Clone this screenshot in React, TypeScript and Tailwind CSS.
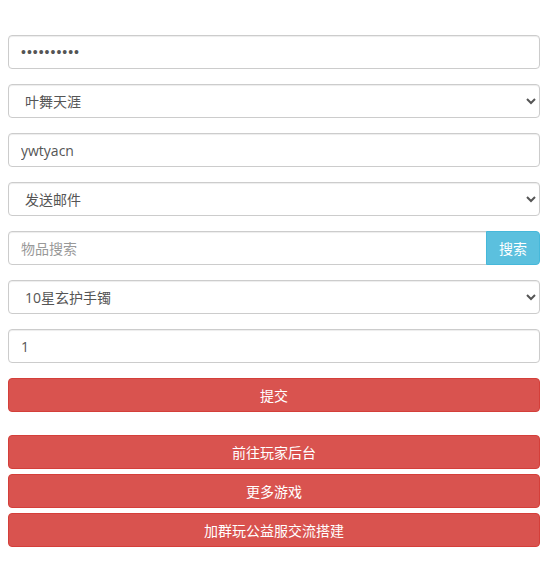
import { useState } from 'react';

const field =
  "block w-full h-[34px] px-3 text-[14px] text-[#555] bg-white border border-[#ccc] rounded-[4px] shadow-[inset_0_1px_1px_rgba(0,0,0,0.075)] outline-none placeholder:text-[#999]";

const redBtn =
  "block w-full h-[34px] text-[14px] text-white bg-[#d9534f] border border-[#d43f3a] rounded-[4px]";

export default function App() {
  const [pwd, setPwd] = useState("1234567890");
  const [role, setRole] = useState("叶舞天涯");
  const [acct, setAcct] = useState("ywtyacn");
  const [action, setAction] = useState("mail");
  const [item, setItem] = useState("10星玄护手镯");
  const [count, setCount] = useState("1");

  return (
    <div
      className="pl-2 pr-[10px] pt-[35px] bg-white min-h-[564px]"
      style={{ fontFamily: '"Open Sans", "Noto Sans CJK SC", sans-serif' }}
    >
      <div className="flex flex-col gap-[15px]">
        <input
          type="password"
          className={`${field} font-['Liberation_Sans'] tracking-[1px]`}
          value={pwd}
          onChange={(e) => setPwd(e.target.value)}
        />

        <select className={field} value={role} onChange={(e) => setRole(e.target.value)}>
          <option>叶舞天涯</option>
        </select>

        <input type="text" className={field} value={acct} onChange={(e) => setAcct(e.target.value)} />

        <select className={field} value={action} onChange={(e) => setAction(e.target.value)}>
          <option value="mail">发送邮件</option>
        </select>

        <div className="flex">
          <input
            type="text"
            placeholder="物品搜索"
            className="block flex-1 min-w-0 h-[34px] px-3 text-[14px] text-[#555] bg-white border border-[#ccc] rounded-l-[4px] shadow-[inset_0_1px_1px_rgba(0,0,0,0.075)] outline-none placeholder:text-[#999]"
          />
          <button className="h-[34px] w-[54px] -ml-px text-[14px] text-white bg-[#5bc0de] border border-[#46b8da] rounded-r-[4px]">
            搜索
          </button>
        </div>

        <select className={field} value={item} onChange={(e) => setItem(e.target.value)}>
          <option>10星玄护手镯</option>
        </select>

        <input type="text" className={field} value={count} onChange={(e) => setCount(e.target.value)} />

        <button className={redBtn}>提交</button>
      </div>

      <div className="flex flex-col gap-[5px] mt-[23px]">
        <button className={redBtn}>前往玩家后台</button>
        <button className={redBtn}>更多游戏</button>
        <button className={redBtn}>加群玩公益服交流搭建</button>
      </div>
    </div>
  );
}
